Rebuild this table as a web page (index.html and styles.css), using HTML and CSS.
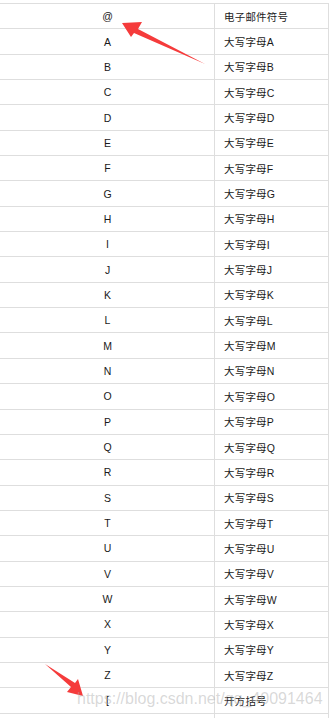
FILE: index.html
```html
<!DOCTYPE html>
<html lang="zh-CN">
<head>
<meta charset="utf-8">
<title>符号表</title>
<link rel="stylesheet" href="styles.css">
</head>
<body>
<div class="page">
  <div class="table">
    <div class="row"><div class="sym">@</div><div class="desc">电子邮件符号</div></div>
    <div class="row"><div class="sym">A</div><div class="desc">大写字母A</div></div>
    <div class="row"><div class="sym">B</div><div class="desc">大写字母B</div></div>
    <div class="row"><div class="sym">C</div><div class="desc">大写字母C</div></div>
    <div class="row"><div class="sym">D</div><div class="desc">大写字母D</div></div>
    <div class="row"><div class="sym">E</div><div class="desc">大写字母E</div></div>
    <div class="row"><div class="sym">F</div><div class="desc">大写字母F</div></div>
    <div class="row"><div class="sym">G</div><div class="desc">大写字母G</div></div>
    <div class="row"><div class="sym">H</div><div class="desc">大写字母H</div></div>
    <div class="row"><div class="sym">I</div><div class="desc">大写字母I</div></div>
    <div class="row"><div class="sym">J</div><div class="desc">大写字母J</div></div>
    <div class="row"><div class="sym">K</div><div class="desc">大写字母K</div></div>
    <div class="row"><div class="sym">L</div><div class="desc">大写字母L</div></div>
    <div class="row"><div class="sym">M</div><div class="desc">大写字母M</div></div>
    <div class="row"><div class="sym">N</div><div class="desc">大写字母N</div></div>
    <div class="row"><div class="sym">O</div><div class="desc">大写字母O</div></div>
    <div class="row"><div class="sym">P</div><div class="desc">大写字母P</div></div>
    <div class="row"><div class="sym">Q</div><div class="desc">大写字母Q</div></div>
    <div class="row"><div class="sym">R</div><div class="desc">大写字母R</div></div>
    <div class="row"><div class="sym">S</div><div class="desc">大写字母S</div></div>
    <div class="row"><div class="sym">T</div><div class="desc">大写字母T</div></div>
    <div class="row"><div class="sym">U</div><div class="desc">大写字母U</div></div>
    <div class="row"><div class="sym">V</div><div class="desc">大写字母V</div></div>
    <div class="row"><div class="sym">W</div><div class="desc">大写字母W</div></div>
    <div class="row"><div class="sym">X</div><div class="desc">大写字母X</div></div>
    <div class="row"><div class="sym">Y</div><div class="desc">大写字母Y</div></div>
    <div class="row"><div class="sym">Z</div><div class="desc">大写字母Z</div></div>
    <div class="row"><div class="sym">[</div><div class="desc">开方括号</div></div>
    <div class="row"><div class="sym"></div><div class="desc"></div></div>
  </div>

  <svg class="arrows" width="330" height="718" viewBox="0 0 330 718" aria-hidden="true">
    <polygon points="122,23 142,22 138,29 205,64 134,33 131,37" fill="#f53b3b"/>
    <polygon points="45,664 75,683 78,679 83,696 67,692 71,687" fill="#f53b3b"/>
  </svg>

  <div class="watermark">https://blog.csdn.net/qq_40091464</div>
</div>
</body>
</html>
```
FILE: styles.css
```css
html, body {
  margin: 0;
  padding: 0;
  background: #ffffff;
}

.page {
  position: relative;
  width: 330px;
  height: 718px;
  overflow: hidden;
}

.table {
  padding-top: 3px;
  width: 329px;
  display: flex;
  flex-direction: column;
  font-family: "Liberation Sans", Arial, "Noto Sans CJK SC", sans-serif;
  font-size: 10.5px;
  color: #1a1a1a;
}

.row {
  box-sizing: border-box;
  height: 25.357px;
  flex: none;
  border-top: 1px solid #dedede;
  display: grid;
  grid-template-columns: 214px 1fr;
}

.sym {
  display: flex;
  align-items: center;
  justify-content: center;
  padding-left: 1px;
}

.desc {
  display: flex;
  align-items: center;
  padding-left: 9px;
  border-left: 1px solid #dedede;
  border-right: 1px solid #dedede;
  letter-spacing: 0.2px;
}

.arrows {
  position: absolute;
  left: 0;
  top: 0;
  pointer-events: none;
}

.watermark {
  position: absolute;
  left: 77px;
  top: 690px;
  font-family: "Liberation Sans", Arial, sans-serif;
  font-size: 16px;
  color: rgba(170, 170, 170, 0.45);
  white-space: nowrap;
  pointer-events: none;
}
```
